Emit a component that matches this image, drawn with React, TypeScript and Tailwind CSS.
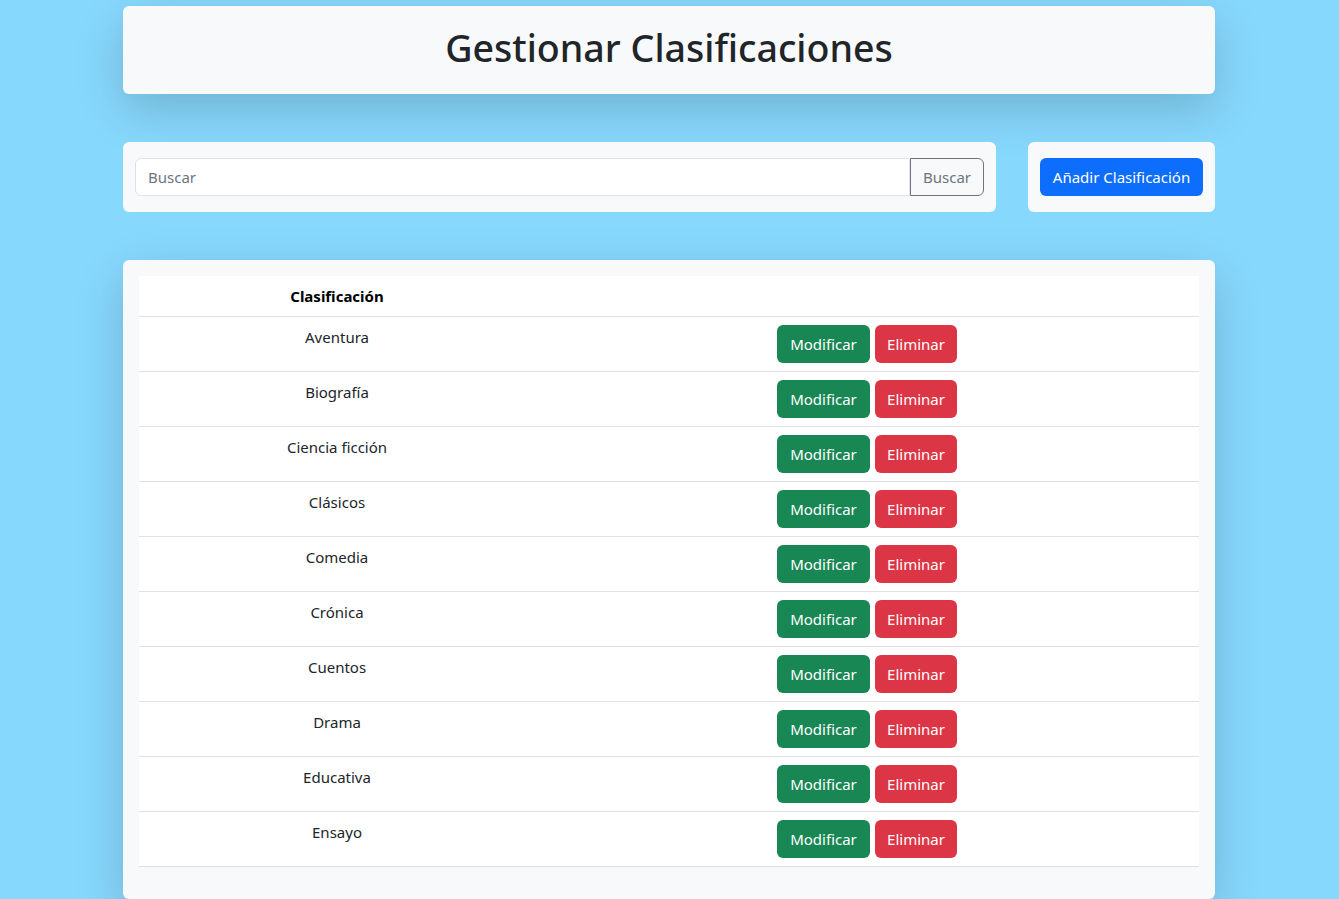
import React from "react";

const rows = [
  "Aventura",
  "Biografía",
  "Ciencia ficción",
  "Clásicos",
  "Comedia",
  "Crónica",
  "Cuentos",
  "Drama",
  "Educativa",
  "Ensayo",
];

export default function App() {
  return (
    <div
      className="min-h-[899px] w-full bg-[#87d8fd] text-[#212529]"
      style={{ fontFamily: '"Noto Sans", "Open Sans", sans-serif' }}
    >
      <div className="ml-[123px] w-[1092px] pt-[6px]">
        <div className="flex h-[88px] items-center justify-center rounded-[6px] bg-[#f8f9fa] pb-[4px] shadow-[0_1rem_3rem_rgba(0,0,0,0.175)]">
          <h1 className="text-[37.6px] font-medium leading-[1.2] text-[#212529]">
            Gestionar Clasificaciones
          </h1>
        </div>

        <div className="mt-[48px] flex gap-[32px]">
          <div className="w-[873px] rounded-[6px] bg-[#f8f9fa] px-[12px] py-[16px]">
            <div className="flex h-[38px]">
              <div className="flex flex-1 items-center rounded-l-[6px] border border-[#dee2e6] bg-white px-[12px] text-[15px] text-[#6c757d]">
                Buscar
              </div>
              <button className="rounded-r-[6px] border border-[#6c757d] px-[12px] text-[15px] text-[#6c757d]">
                Buscar
              </button>
            </div>
          </div>
          <div className="flex-1 rounded-[6px] bg-[#f8f9fa] px-[12px] py-[16px]">
            <button className="h-[38px] w-full rounded-[6px] bg-[#0d6efd] text-[15px] text-white">
              Añadir Clasificación
            </button>
          </div>
        </div>

        <div className="mt-[48px] rounded-[6px] bg-[#f8f9fa] p-[16px] shadow-[0_1rem_3rem_rgba(0,0,0,0.175)]">
          <div className="mb-[16px] bg-white text-[15px] text-black">
            <div className="flex h-[41px] border-b border-[#dee2e6]">
              <div className="flex w-[396px] items-center justify-center font-bold">
                Clasificación
              </div>
              <div className="flex-1" />
            </div>
            {rows.map((r) => (
              <div key={r} className="flex h-[55px] border-b border-[#dee2e6]">
                <div className="w-[396px] pt-[8px] text-center leading-[24px] text-[#212529]">
                  {r}
                </div>
                <div className="flex flex-1 items-center justify-center gap-[5px]">
                  <button className="h-[38px] w-[93px] rounded-[6px] bg-[#198754] text-[15px] text-white">
                    Modificar
                  </button>
                  <button className="h-[38px] w-[82px] rounded-[6px] bg-[#dc3545] text-[15px] text-white">
                    Eliminar
                  </button>
                </div>
              </div>
            ))}
          </div>
        </div>
      </div>
    </div>
  );
}
